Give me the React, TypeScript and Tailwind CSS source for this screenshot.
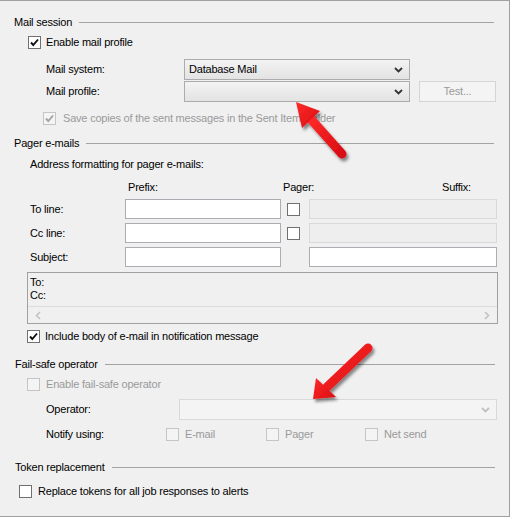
import React from "react";

const font = "[font-family:'Liberation_Sans',Arial,sans-serif]";

const Check = ({ checked = false, disabled = false }: { checked?: boolean; disabled?: boolean }) => (
  <span
    className={`flex w-[13px] h-[13px] shrink-0 items-center justify-center border ${
      disabled ? "border-[#c5c5c5] bg-[#f4f4f4]" : "border-[#707070] bg-white"
    }`}
  >
    {checked && (
      <svg width="11" height="11" viewBox="0 0 11 11">
        <path
          d="M2 5.5 L4.3 8 L9 2.5"
          fill="none"
          stroke={disabled ? "#a3a3a3" : "#111"}
          strokeWidth="1.9"
        />
      </svg>
    )}
  </span>
);

const Chevron = ({ color = "#333" }: { color?: string }) => (
  <svg width="9" height="6" viewBox="0 0 9 6">
    <path d="M1 1 L4.5 4.5 L8 1" fill="none" stroke={color} strokeWidth="1.8" />
  </svg>
);

const Select = ({ value, width, disabled = false }: { value?: string; width: string; disabled?: boolean }) => (
  <div
    className={`flex h-[21px] items-center justify-between pl-[4px] pr-[6px] border ${width} ${
      disabled
        ? "border-[#d9d9d9] bg-[#f4f4f4]"
        : "border-[#acacac] bg-gradient-to-b from-[#f3f3f3] to-[#e3e3e3]"
    }`}
  >
    <span className="text-black">{value}</span>
    <Chevron color={disabled ? "#c0c0c0" : "#333"} />
  </div>
);

const Input = ({ width, disabled = false }: { width: string; disabled?: boolean }) => (
  <div
    className={`h-[20px] border ${width} ${
      disabled ? "border-[#d9d9d9] bg-[#eeeeee]" : "border-[#abadb3] bg-white"
    }`}
  />
);

const GroupHeader = ({ title }: { title: string }) => (
  <div className="flex h-[16px] w-[480px] items-center gap-[7px]">
    <span className="text-black whitespace-nowrap">{title}</span>
    <div className="h-px flex-1 bg-[#a3a3a3]" />
  </div>
);

const Arrows = () => (
  <svg className="absolute left-0 top-0 pointer-events-none" width="510" height="517" viewBox="0 0 510 517">
    <defs>
      <filter id="sh" x="-30%" y="-30%" width="160%" height="160%">
        <feDropShadow dx="2" dy="3" stdDeviation="1.6" floodColor="#000" floodOpacity="0.45" />
      </filter>
      <linearGradient id="rd" x1="0" y1="0" x2="1" y2="1">
        <stop offset="0" stopColor="#ff2a2a" />
        <stop offset="1" stopColor="#d90d12" />
      </linearGradient>
    </defs>
    <g filter="url(#sh)">
      <line x1="342" y1="153" x2="309" y2="116" stroke="url(#rd)" strokeWidth="9" strokeLinecap="round" />
      <polygon points="296,101 320,110 302,127" fill="url(#rd)" />
    </g>
    <g filter="url(#sh)">
      <line x1="368" y1="347" x2="327" y2="386" stroke="url(#rd)" strokeWidth="9" strokeLinecap="round" />
      <polygon points="313,398 316,377 336,396" fill="url(#rd)" />
    </g>
  </svg>
);

export default function App() {
  return (
    <div
      className={`relative flex flex-col w-[510px] h-[517px] bg-[#f0f0f0] border-t border-r border-b border-[#a0a0a0] pl-[14px] pt-[13px] text-[11px] tracking-[-0.2px] leading-none text-black ${font}`}
    >
      {/* Mail session */}
      <GroupHeader title="Mail session" />
      <div className="mt-[6px] ml-[14px] flex h-[13px] items-center gap-[5px]">
        <Check checked />
        <span>Enable mail profile</span>
      </div>
      <div className="mt-[10px] ml-[32px] flex h-[21px] items-center">
        <span className="w-[138px]">Mail system:</span>
        <Select value="Database Mail" width="w-[226px]" />
      </div>
      <div className="mt-[1px] ml-[32px] flex h-[21px] items-center">
        <span className="w-[138px]">Mail profile:</span>
        <Select width="w-[226px]" />
        <div className="ml-[9px] flex h-[21px] w-[77px] items-center justify-center border border-[#d5d5d5] bg-[#f4f4f4] text-[#9a9a9a]">
          Test...
        </div>
      </div>
      <div className="mt-[10px] ml-[29px] flex h-[13px] items-center gap-[7px] text-[#9a9a9a]">
        <Check checked disabled />
        <span>Save copies of the sent messages in the Sent Items folder</span>
      </div>

      {/* Pager e-mails */}
      <div className="mt-[10px]">
        <GroupHeader title="Pager e-mails" />
      </div>
      <div className="mt-[5px] ml-[16px] flex h-[16px] items-center">Address formatting for pager e-mails:</div>
      <div className="mt-[7px] ml-[114px] flex h-[16px] items-center">
        <span className="w-[155px]">Prefix:</span>
        <span className="w-[159px]">Pager:</span>
        <span>Suffix:</span>
      </div>
      {[
        { label: "To line:", pager: true, suffixDisabled: true },
        { label: "Cc line:", pager: true, suffixDisabled: true },
        { label: "Subject:", pager: false, suffixDisabled: false },
      ].map((row) => (
        <div key={row.label} className="mt-[4px] ml-[16px] flex h-[20px] items-center">
          <span className="w-[95px]">{row.label}</span>
          <Input width="w-[156px]" />
          <span className="ml-[6px] w-[13px]">{row.pager && <Check />}</span>
          <span className="ml-[9px]">
            <Input width="w-[188px]" disabled={row.suffixDisabled} />
          </span>
        </div>
      ))}
      <div className="mt-[5px] ml-[13px] flex h-[52px] w-[471px] flex-col border border-[#a0a0a0] bg-[#f0f0f0]">
        <div className="flex flex-1 flex-col gap-[2px] pl-[2px] pt-[4px] leading-[11px]">
          <span>To:</span>
          <span>Cc:</span>
        </div>
        <div className="flex h-[17px] items-center justify-between border-t border-[#dcdcdc] px-[7px]">
          <svg width="6" height="9" viewBox="0 0 6 9">
            <path d="M5 1 L1.5 4.5 L5 8" fill="none" stroke="#c2c2c2" strokeWidth="1.6" />
          </svg>
          <svg width="6" height="9" viewBox="0 0 6 9">
            <path d="M1 1 L4.5 4.5 L1 8" fill="none" stroke="#c2c2c2" strokeWidth="1.6" />
          </svg>
        </div>
      </div>
      <div className="mt-[6px] ml-[13px] flex h-[13px] items-center gap-[5px]">
        <Check checked />
        <span>Include body of e-mail in notification message</span>
      </div>

      {/* Fail-safe operator */}
      <div className="mt-[13px] ml-px">
        <GroupHeader title="Fail-safe operator" />
      </div>
      <div className="mt-[6px] ml-[13px] flex h-[13px] items-center gap-[6px] text-[#9a9a9a]">
        <Check disabled />
        <span>Enable fail-safe operator</span>
      </div>
      <div className="mt-[8px] ml-[32px] flex h-[21px] items-center">
        <span className="w-[133px]">Operator:</span>
        <Select width="w-[318px]" disabled />
      </div>
      <div className="mt-[8px] ml-[32px] flex h-[13px] items-center">
        <span className="w-[120px]">Notify using:</span>
        <span className="flex w-[100px] items-center gap-[6px] text-[#9a9a9a]">
          <Check disabled />
          E-mail
        </span>
        <span className="flex w-[99px] items-center gap-[6px] text-[#9a9a9a]">
          <Check disabled />
          Pager
        </span>
        <span className="flex items-center gap-[6px] text-[#9a9a9a]">
          <Check disabled />
          Net send
        </span>
      </div>

      {/* Token replacement */}
      <div className="mt-[18px] ml-px">
        <GroupHeader title="Token replacement" />
      </div>
      <div className="mt-[10px] ml-[5px] flex h-[13px] items-center gap-[6px]">
        <Check />
        <span>Replace tokens for all job responses to alerts</span>
      </div>

      <Arrows />
    </div>
  );
}
